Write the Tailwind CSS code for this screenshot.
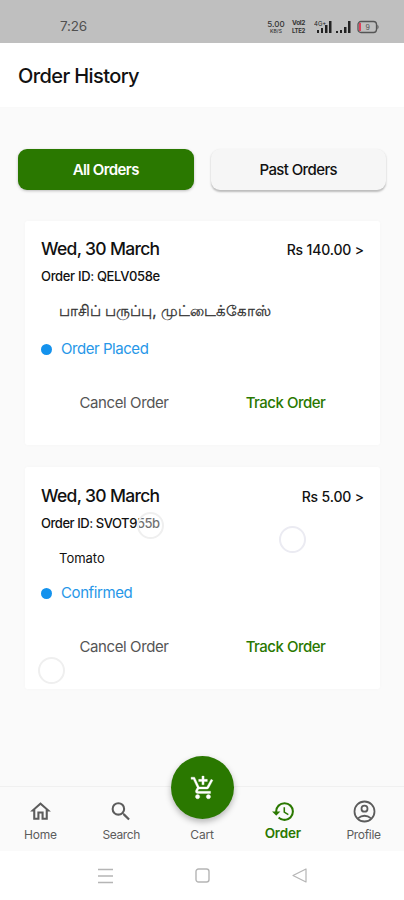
<!DOCTYPE html>
<html lang="en">
<head>
<meta charset="utf-8">
<title>Order History</title>
<script src="https://cdn.jsdelivr.net/npm/@tailwindcss/browser@4"></script>
</head>
<body class="relative flex h-[900px] w-[404px] flex-col overflow-hidden bg-[#fafafa] font-['Inter','Noto_Sans',sans-serif] text-[#111] whitespace-nowrap">
  <div class="flex h-[43px] shrink-0 items-center justify-between bg-[#bfbfbf] pt-[10px] pr-[24px] pl-[60px]">
    <span class="text-[13.5px] tracking-[-0.2px] text-[#505050]">7:26</span>
    <div class="flex h-[14px] items-center text-[#333]">
      <div class="mr-px flex w-[20px] flex-col items-center font-medium"><span class="text-[8px] leading-[8px]">5.00</span><span class="text-[5px] leading-[6px]">KB/S</span></div>
      <div class="ml-[4px] flex w-[15px] flex-col items-center font-bold"><span class="text-[6.5px] leading-[7px] tracking-[-0.4px]">VoI2</span><span class="text-[6px] leading-[7px] tracking-[-0.3px]">LTE2</span></div>
      <svg class="ml-[8px]" width="18" height="14" viewBox="0 0 18 14" fill="#222"><text x="0" y="6" font-size="6">4G+</text><path d="M3 10h2v3H3zM7 8h2v5H7zM11 5h2.500v8H11zM15 1h2.500v12H15z"/></svg>
      <svg class="ml-[4px]" width="16" height="14" viewBox="0 0 16 14" fill="#222"><path d="M0 11h2v2H0zM4 10h2v3H4zM8 7h2.500v6H8zM12 1h2.500v12H12z"/></svg>
      <svg class="ml-[5px]" width="23" height="14" viewBox="0 0 23 14"><rect x="1" y="1.500" width="18.500" height="11" rx="3" fill="none" stroke="#555" stroke-width="1.300"/><path d="M2 3h2v8H2z" fill="#e0405a"/><path d="M20.500 4.500q2 2.500 0 5z" fill="#444"/><text x="8.500" y="9.500" font-size="7" fill="#555">9</text></svg>
    </div>
  </div>
  <header class="flex h-[64px] shrink-0 items-center bg-white pl-[18px] shadow-[0_1px_1px_#f9f9f9]">
    <h1 class="pt-px text-[20px] font-medium tracking-[-0.6px]">Order History</h1>
  </header>
  <main class="flex flex-1 flex-col">
    <div class="mt-[42px] flex gap-[17px] px-[18px] text-[15px]">
      <button class="h-[41px] w-[176px] rounded-[9px] bg-[#2a7800] pt-[2px] font-semibold tracking-[-0.6px] text-white shadow-[0_1px_3px_rgba(0,0,0,0.25)]">All Orders</button>
      <button class="h-[41px] w-[176px] rounded-[9px] bg-[#f6f6f6] pt-[2px] font-medium tracking-[-0.6px] shadow-[0_1.5px_2px_rgba(0,0,0,0.25)]">Past Orders</button>
    </div>
    <section class="mt-[31px] ml-[25px] flex h-[224px] w-[355px] flex-col rounded-[3px] bg-white px-[16px] pt-[16px] shadow-[0_0_4px_rgba(0,0,0,0.025)]">
      <div class="flex h-6 items-center justify-between"><h2 class="text-[17.5px] font-medium tracking-[-0.7px]">Wed, 30 March</h2><span class="text-[14px] font-medium tracking-[-0.15px]">Rs 140.00 &gt;</span></div>
      <p class="mt-[5px] h-5 text-[13px] font-medium leading-5 tracking-[-0.33px]">Order ID: QELV058e</p>
      <p class="mt-[15px] h-5 pl-[18px] text-[14.95px] leading-5 text-[#333] [-webkit-text-stroke:0.3px_#333]">பாசிப் பருப்பு, முட்டைக்கோஸ்</p>
      <div class="mt-[18px] flex h-5 items-center gap-[9px] text-[15px] tracking-[-0.45px] text-[#2797e8]"><i class="size-[11px] rounded-full bg-[#1492ed]"></i>Order Placed</div>
      <div class="mt-[34px] flex h-5 items-center text-[15px]"><button class="w-[166px] text-[#555] tracking-[-0.4px]">Cancel Order</button><button class="w-[157px] font-medium tracking-[-0.5px] text-[#2a7800]">Track Order</button></div>
    </section>
    <section class="relative mt-[22px] ml-[25px] flex h-[222px] w-[355px] flex-col rounded-[3px] bg-white px-[16px] pt-[17px] shadow-[0_0_4px_rgba(0,0,0,0.025)]">
      <div class="flex h-6 items-center justify-between"><h2 class="text-[17.5px] font-medium tracking-[-0.7px]">Wed, 30 March</h2><span class="text-[14px] font-medium tracking-[-0.15px]">Rs 5.00 &gt;</span></div>
      <p class="mt-[5px] h-5 text-[13px] font-medium leading-5 tracking-[-0.45px]">Order ID: SVOT955b</p>
      <p class="mt-[15px] h-5 pl-[18px] text-[13px] leading-5">Tomato</p>
      <div class="mt-[15px] flex h-5 items-center gap-[9px] text-[15px] tracking-[-0.4px] text-[#2797e8]"><i class="size-[11px] rounded-full bg-[#1492ed]"></i>Confirmed</div>
      <div class="mt-[34px] flex h-5 items-center text-[15px]"><button class="w-[166px] text-[#555] tracking-[-0.4px]">Cancel Order</button><button class="w-[157px] font-medium tracking-[-0.5px] text-[#2a7800]">Track Order</button></div>
      <i class="absolute top-[45px] left-[112px] size-[27px] rounded-full border-2 border-[#efefef] bg-white/40"></i>
      <i class="absolute top-[59px] left-[254px] size-[27px] rounded-full border-2 border-[#ebebf2]"></i>
      <i class="absolute top-[190px] left-[13px] size-[27px] rounded-full border-2 border-[#efefef]"></i>
    </section>
  </main>
  <nav class="relative grid h-[65px] shrink-0 grid-cols-5 border-t border-[#f0f0f0] bg-[#fafafa] pt-[12px] text-[12px] text-[#5c5c5c]">
    <div class="flex flex-col items-center"><svg width="25" height="25" viewBox="0 0 24 24" fill="currentColor"><path d="M12 5.690l5 4.500V18h-2v-6H9v6H7v-7.810l5-4.500M12 3L2 12h3v8h6v-6h2v6h6v-8h3L12 3z"/></svg><span class="mt-[3px] leading-4 tracking-[-0.2px]">Home</span></div>
    <div class="flex flex-col items-center"><svg width="26" height="25" viewBox="0 0 24 24" fill="currentColor"><path d="M15.500 14h-.79l-.28-.27A6.471 6.471 0 0 0 16 9.500 6.500 6.500 0 1 0 9.500 16c1.610 0 3.090-.59 4.230-1.570l.27.28v.79l5 4.990L20.490 19l-4.990-5zm-6 0C7.010 14 5 11.990 5 9.500S7.010 5 9.500 5 14 7.010 14 9.500 11.990 14 9.500 14z"/></svg><span class="mt-[3px] leading-4 tracking-[-0.4px]">Search</span></div>
    <div class="flex flex-col items-center pt-[28px]"><span class="leading-4 tracking-[-0.2px]">Cart</span></div>
    <div class="flex flex-col items-center text-[#2a7800]"><svg class="ml-px" width="25" height="25" viewBox="0 0 24 24" fill="currentColor"><path d="M13 3a9 9 0 0 0-9 9H1l3.890 3.890.07.14L9 12H6c0-3.870 3.130-7 7-7s7 3.130 7 7-3.130 7-7 7c-1.930 0-3.680-.79-4.940-2.060l-1.420 1.420A8.954 8.954 0 0 0 13 21a9 9 0 0 0 0-18zm-1 5v5l4.280 2.540.72-1.210-3.500-2.080V8H12z"/></svg><span class="mt-[1px] text-[13.5px] font-semibold leading-4 tracking-[-0.2px]">Order</span></div>
    <div class="flex flex-col items-center"><svg class="ml-px" width="25" height="25" viewBox="0 0 24 24" fill="none" stroke="currentColor" stroke-width="1.700"><circle cx="12" cy="12" r="9.600"/><circle cx="12" cy="9.300" r="2.900"/><path d="M5.600 18.600Q12 13.500 18.400 18.600"/></svg><span class="mt-[3px] leading-4 tracking-[-0.3px]">Profile</span></div>
    <div class="absolute top-[-31px] left-[171px] flex size-[63px] items-center justify-center rounded-full bg-[#2a7800] shadow-[0_3px_6px_rgba(0,0,0,0.28)]"><svg width="26" height="26" viewBox="0 0 24 24" fill="#fff" stroke="#fff" stroke-width="0.300"><path d="M11 9h2V6h3V4h-3V1h-2v3H8v2h3v3zm-4 9c-1.100 0-1.990.9-1.990 2S5.900 22 7 22s2-.9 2-2-.9-2-2-2zm10 0c-1.100 0-1.990.9-1.990 2s.89 2 1.990 2 2-.9 2-2-.9-2-2-2zm-8.900-5h7.450c.75 0 1.410-.41 1.750-1.030L21.160 4.960 19.420 4l-3.870 7H8.530L4.270 2H1v2h2l3.600 7.590-1.350 2.440C4.520 15.370 5.480 17 7 17h12v-2H7l1.100-2z"/></svg></div>
  </nav>
  <div class="flex h-[49px] shrink-0 items-center justify-center gap-[82px] bg-white text-[#b5b5b5]">
    <svg width="15" height="16" viewBox="0 0 15 16" fill="none" stroke="currentColor" stroke-width="1.400"><path d="M0 1.500h15M0 8h15M0 14.500h15"/></svg>
    <svg width="15" height="15" viewBox="0 0 15 15" fill="none" stroke="currentColor" stroke-width="1.400"><rect x="1" y="1" width="13" height="13" rx="2.500"/></svg>
    <svg width="15" height="15" viewBox="0 0 15 15" fill="none" stroke="currentColor" stroke-width="1.200" stroke-linejoin="round"><path d="M1 7.500 14 1v13z"/></svg>
  </div>
</body>
</html>
